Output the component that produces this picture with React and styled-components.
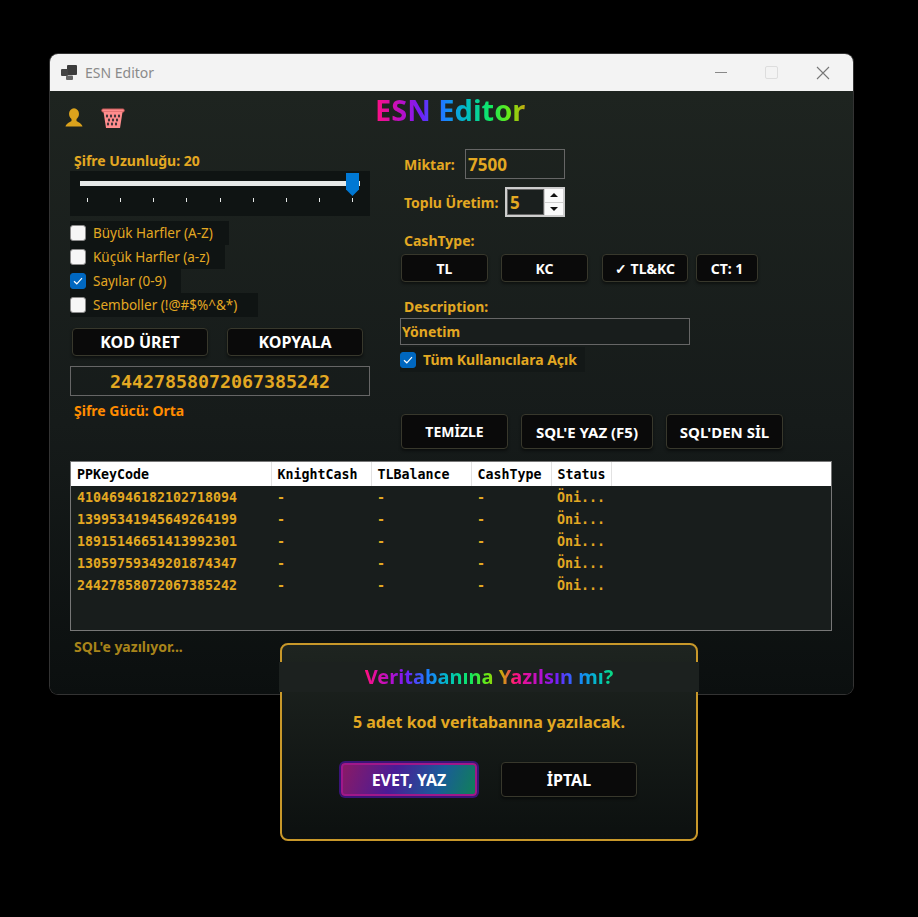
import React from 'react';
import styled, { createGlobalStyle } from 'styled-components';

const GOLD = '#e3a822';
const SANS = '"Noto Sans", "Open Sans", sans-serif';
const MONO = '"DejaVu Sans Mono", "Liberation Mono", monospace';

const rows = [
  '41046946182102718094',
  '13995341945649264199',
  '18915146651413992301',
  '13059759349201874347',
  '24427858072067385242',
];

const checks = [
  { label: 'Büyük Harfler (A-Z)', width: 159, on: false },
  { label: 'Küçük Harfler (a-z)', width: 155, on: false },
  { label: 'Sayılar (0-9)', width: 111, on: true },
  { label: 'Semboller (!@#$%^&*)', width: 188, on: false },
];

function CheckMark() {
  return (
    <svg width="10" height="8" viewBox="0 0 10 8" fill="none">
      <path d="M1 4.2 L3.8 6.8 L9 1.2" stroke="#fff" strokeWidth="1.2" />
    </svg>
  );
}

function AppIcon() {
  return (
    <svg width="16" height="15" viewBox="0 0 16 15">
      <rect x="6" y="0" width="10" height="10" rx="1" fill="#3c3c3c" />
      <rect x="0" y="4" width="7" height="7" rx="1" fill="#444" />
      <rect x="5" y="10.5" width="7" height="4.5" rx="1" fill="#666" />
    </svg>
  );
}

function UserIcon() {
  return (
    <svg width="18" height="19" viewBox="0 0 18 19">
      <ellipse cx="9" cy="6" rx="5" ry="5.8" fill="#dba21c" />
      <path d="M6.5 10 H11.5 V13 C13.5 14.6 16.5 15 17.5 18.5 H0.5 C1.5 15 4.5 14.6 6.5 13 Z" fill="#dba21c" />
    </svg>
  );
}

function BasketIcon() {
  const holes = [
    [6, 8], [10, 8], [14, 8], [18, 8],
    [8, 12], [12, 12], [16, 12],
    [7, 16], [11, 16], [15, 16],
  ];
  return (
    <svg width="24" height="21" viewBox="0 0 24 21">
      <rect x="0.8" y="1" width="22.4" height="3" rx="1.2" fill="#ff8d8d" stroke="#c85a5a" strokeWidth="1" />
      <path d="M2.5 4 H21.5 L19 20 H5 Z" fill="#ff8d8d" />
      {holes.map(([x, y]) => (
        <path key={`${x}-${y}`} d={`M${x} ${y - 2} L${x + 1.2} ${y} L${x} ${y + 2} L${x - 1.2} ${y} Z`} fill="#2a2a30" />
      ))}
    </svg>
  );
}

function App() {
  return (
    <>
      <GlobalStyle />
      <Window>
        <TitleBar>
          <AppIcon />
          <WindowName>ESN Editor</WindowName>
          <WindowControls>
            <MinimizeGlyph />
            <MaximizeGlyph />
            <svg width="14" height="14" viewBox="0 0 14 14">
              <path d="M1 1 L13 13 M13 1 L1 13" stroke="#777" strokeWidth="1.1" />
            </svg>
          </WindowControls>
        </TitleBar>

        <Body>
          <Header>
            <HeaderIcons>
              <UserIcon />
              <BasketIcon />
            </HeaderIcons>
            <Rainbow $size={29} $period={165}>ESN Editor</Rainbow>
          </Header>

          <Columns>
            <Column>
              <SliderLabel>Şifre Uzunluğu: 20</SliderLabel>
              <SliderPanel>
                <SliderTrack>
                  <SliderThumb />
                </SliderTrack>
                <Ticks>
                  {Array.from({ length: 9 }, (_, i) => <Tick key={i} />)}
                </Ticks>
              </SliderPanel>

              <CheckList>
                {checks.map((c) => (
                  <CheckRow key={c.label} $width={c.width}>
                    <Box $on={c.on}>{c.on && <CheckMark />}</Box>
                    <CheckText>{c.label}</CheckText>
                  </CheckRow>
                ))}
              </CheckList>

              <MainButtons>
                <Button $w={136} $h={28} $size={16}>KOD ÜRET</Button>
                <Button $w={136} $h={28} $size={16}>KOPYALA</Button>
              </MainButtons>
              <CodeBox>24427858072067385242</CodeBox>
              <Strength>Şifre Gücü: Orta</Strength>
            </Column>

            <Column>
              <FieldRow>
                <FieldLabel $w={61}>Miktar:</FieldLabel>
                <AmountBox>7500</AmountBox>
              </FieldRow>
              <SpinRow>
                <FieldLabel $w={101}>Toplu Üretim:</FieldLabel>
                <Spinner>
                  <SpinValue>5</SpinValue>
                  <SpinButtons>
                    <SpinButton><ArrowUp /></SpinButton>
                    <SpinButton><ArrowDown /></SpinButton>
                  </SpinButtons>
                </Spinner>
              </SpinRow>

              <CashLabel>CashType:</CashLabel>
              <CashRow>
                <Button $w={87} $h={28} $size={14}>TL</Button>
                <Button $w={87} $h={28} $size={14} $ml={13}>KC</Button>
                <Button $w={86} $h={28} $size={14} $ml={14}>✓ TL&amp;KC</Button>
                <Button $w={62} $h={28} $size={14} $ml={8}>CT: 1</Button>
              </CashRow>

              <DescLabel>Description:</DescLabel>
              <DescBox>Yönetim</DescBox>
              <PublicRow>
                <Box $on><CheckMark /></Box>
                <PublicText>Tüm Kullanıcılara Açık</PublicText>
              </PublicRow>

              <ActionRow>
                <Button $w={107} $h={35} $size={14}>TEMİZLE</Button>
                <Button $w={132} $h={35} $size={15} $ml={13}>SQL'E YAZ (F5)</Button>
                <Button $w={117} $h={35} $size={15} $ml={13}>SQL'DEN SİL</Button>
              </ActionRow>
            </Column>
          </Columns>

          <TableBox>
            <Table>
              <colgroup>
                <col width="200" />
                <col width="100" />
                <col width="100" />
                <col width="80" />
                <col width="60" />
                <col />
              </colgroup>
              <thead>
                <tr>
                  <Th>PPKeyCode</Th>
                  <Th>KnightCash</Th>
                  <Th>TLBalance</Th>
                  <Th>CashType</Th>
                  <Th>Status</Th>
                  <Th $blank />
                </tr>
              </thead>
              <tbody>
                {rows.map((code) => (
                  <tr key={code}>
                    <Td>{code}</Td>
                    <Td>-</Td>
                    <Td>-</Td>
                    <Td>-</Td>
                    <Td>Öni...</Td>
                    <Td />
                  </tr>
                ))}
              </tbody>
            </Table>
          </TableBox>
          <StatusLine>SQL'e yazılıyor...</StatusLine>
        </Body>

        <Modal>
          <ModalTitle>
            <Rainbow $size={20} $period={150}>Veritabanına Yazılsın mı?</Rainbow>
          </ModalTitle>
          <ModalMessage>5 adet kod veritabanına yazılacak.</ModalMessage>
          <ModalButtons>
            <ConfirmButton>EVET, YAZ</ConfirmButton>
            <Button $w={136} $h={35} $size={16}>İPTAL</Button>
          </ModalButtons>
        </Modal>
      </Window>
    </>
  );
}

export default App;

// STYLES
const GlobalStyle = createGlobalStyle`
  html, body {
    margin: 0;
    background: #000;
  }
  body {
    font-family: ${SANS};
    min-height: 917px;
  }
`;

const Window = styled.div`
  position: relative;
  width: 803px;
  height: 640px;
  margin: 54px 0 0 50px;
  display: flex;
  flex-direction: column;
  border-radius: 8px;
  box-shadow: 0 0 0 1px #333;
`;

const TitleBar = styled.div`
  height: 37px;
  flex: none;
  display: flex;
  align-items: center;
  padding: 0 0 0 11px;
  background: #f3f3f3;
  border-radius: 8px 8px 0 0;
`;

const WindowName = styled.span`
  margin-left: 8px;
  font-size: 14px;
  color: #8a8a8a;
`;

const WindowControls = styled.div`
  margin-left: auto;
  display: flex;
  align-items: center;
  gap: 38px;
  padding-right: 23px;
`;

const MinimizeGlyph = styled.span`
  width: 12px;
  height: 1px;
  background: #888;
`;

const MaximizeGlyph = styled.span`
  width: 11px;
  height: 11px;
  border: 1px solid #ddd;
  border-radius: 2px;
`;

const Body = styled.div`
  flex: 1;
  display: flex;
  flex-direction: column;
  padding: 0 21px 0 20px;
  background: linear-gradient(180deg, #1e2420 0%, #161b1a 55%, #0b0f0f 100%);
  border-radius: 0 0 8px 8px;
`;

const Header = styled.div`
  height: 58px;
  flex: none;
  display: flex;
  align-items: flex-start;
`;

const HeaderIcons = styled.div`
  width: 305px;
  flex: none;
  margin-left: -5px;
  margin-right: 5px;
  padding-top: 17px;
  display: flex;
  align-items: flex-start;
  gap: 18px;
`;

const Rainbow = styled.span`
  display: inline-block;
  font-family: ${SANS};
  font-weight: 700;
  font-size: ${(p) => p.$size}px;
  line-height: 1.3;
  color: transparent;
  background: repeating-linear-gradient(
    90deg,
    #ff1080 0,
    #b010d0 ${(p) => p.$period * 0.18}px,
    #7020f8 ${(p) => p.$period * 0.28}px,
    #1a80ff ${(p) => p.$period * 0.42}px,
    #00c0c0 ${(p) => p.$period * 0.56}px,
    #10e860 ${(p) => p.$period * 0.7}px,
    #70e810 ${(p) => p.$period * 0.82}px,
    #d0a010 ${(p) => p.$period * 0.92}px,
    #ff1080 ${(p) => p.$period}px
  );
  -webkit-background-clip: text;
  background-clip: text;
`;

const Columns = styled.div`
  height: 312px;
  flex: none;
  display: grid;
  grid-template-columns: 300px 1fr;
  column-gap: 30px;
`;

const Column = styled.div`
  display: flex;
  flex-direction: column;
  align-items: flex-start;
`;

const GoldLabel = styled.div`
  font-weight: 700;
  font-size: 14px;
  color: ${GOLD};
  white-space: nowrap;
`;

const SliderLabel = styled(GoldLabel)`
  height: 22px;
  line-height: 24px;
  padding-left: 4px;
`;

const SliderPanel = styled.div`
  width: 300px;
  height: 45px;
  box-sizing: border-box;
  padding: 10px 10px 0;
  background: #0f1413;
`;

const SliderTrack = styled.div`
  position: relative;
  height: 5px;
  background: #e6e9e8;
`;

const SliderThumb = styled.div`
  position: absolute;
  right: 1px;
  top: -8px;
  width: 13px;
  height: 23px;
  background: #0078d4;
  clip-path: polygon(0 0, 100% 0, 100% 72%, 50% 100%, 0 72%);
`;

const Ticks = styled.div`
  display: flex;
  justify-content: space-between;
  padding: 12px 7px 0;
`;

const Tick = styled.span`
  width: 1px;
  height: 4px;
  background: #e6e9e8;
`;

const CheckList = styled.div`
  margin-top: 5px;
  display: flex;
  flex-direction: column;
`;

const CheckRow = styled.div`
  width: ${(p) => p.$width}px;
  height: 24px;
  display: flex;
  align-items: center;
  gap: 7px;
  background: #0f1413;
`;

const Box = styled.span`
  width: 16px;
  height: 16px;
  flex: none;
  box-sizing: border-box;
  display: flex;
  align-items: center;
  justify-content: center;
  border-radius: 3px;
  background: ${(p) => (p.$on ? '#0067c0' : '#f6f6f6')};
  border: 1px solid ${(p) => (p.$on ? '#0067c0' : '#8a8a8a')};
`;

const CheckText = styled.span`
  font-size: 13.5px;
  color: ${GOLD};
  white-space: nowrap;
`;

const Button = styled.div`
  width: ${(p) => p.$w}px;
  height: ${(p) => p.$h}px;
  margin-left: ${(p) => p.$ml || 0}px;
  flex: none;
  box-sizing: border-box;
  display: flex;
  align-items: center;
  justify-content: center;
  background: #0a0a0a;
  border: 1px solid #38382c;
  border-radius: 4px;
  box-shadow: 0 2px 3px rgba(0, 0, 0, 0.45);
  color: #fff;
  font-weight: 700;
  font-size: ${(p) => p.$size}px;
  white-space: nowrap;
`;

const MainButtons = styled.div`
  margin: 11px 0 0 2px;
  display: flex;
  gap: 19px;
`;

const CodeBox = styled.div`
  width: 300px;
  height: 30px;
  margin-top: 10px;
  box-sizing: border-box;
  display: flex;
  align-items: center;
  justify-content: center;
  border: 1px solid #666;
  font-family: ${MONO};
  font-weight: 700;
  font-size: 18.3px;
  color: ${GOLD};
`;

const Strength = styled.div`
  margin-top: 5px;
  padding-left: 4px;
  font-weight: 700;
  font-size: 14px;
  color: #ff8c00;
`;

const FieldRow = styled.div`
  height: 30px;
  display: flex;
  align-items: center;
  padding-left: 4px;
`;

const SpinRow = styled(FieldRow)`
  margin-top: 8px;
`;

const FieldLabel = styled(GoldLabel)`
  width: ${(p) => p.$w}px;
  flex: none;
`;

const AmountBox = styled.div`
  width: 100px;
  height: 30px;
  box-sizing: border-box;
  padding-left: 2px;
  display: flex;
  align-items: center;
  border: 1px solid #666;
  font-weight: 700;
  font-size: 17px;
  color: ${GOLD};
`;

const Spinner = styled.div`
  width: 60px;
  height: 30px;
  box-sizing: border-box;
  display: flex;
  gap: 1px;
  padding: 1px;
  border: 1px solid #ccc;
  background: #cfcfcf;
`;

const SpinValue = styled.div`
  width: 37px;
  box-sizing: border-box;
  display: flex;
  align-items: center;
  padding-left: 2px;
  border: 1px solid #666;
  background: #1a1f1e;
  font-weight: 700;
  font-size: 17px;
  color: ${GOLD};
`;

const SpinButtons = styled.div`
  flex: 1;
  display: flex;
  flex-direction: column;
  gap: 1px;
`;

const SpinButton = styled.div`
  flex: 1;
  display: flex;
  align-items: center;
  justify-content: center;
  background: #fafafa;
`;

const ArrowUp = styled.span`
  border-left: 4px solid transparent;
  border-right: 4px solid transparent;
  border-bottom: 4px solid #111;
`;

const ArrowDown = styled.span`
  border-left: 4px solid transparent;
  border-right: 4px solid transparent;
  border-top: 4px solid #111;
`;

const CashLabel = styled(GoldLabel)`
  height: 20px;
  line-height: 20px;
  margin-top: 14px;
  padding-left: 4px;
`;

const CashRow = styled.div`
  margin: 3px 0 0 1px;
  display: flex;
`;

const DescLabel = styled(GoldLabel)`
  height: 20px;
  line-height: 20px;
  margin-top: 15px;
  padding-left: 4px;
`;

const DescBox = styled.div`
  width: 290px;
  height: 27px;
  margin-top: 1px;
  box-sizing: border-box;
  display: flex;
  align-items: center;
  padding-left: 1px;
  border: 1px solid #666;
  background: #181d1c;
  font-weight: 700;
  font-size: 14px;
  color: ${GOLD};
`;

const PublicRow = styled.div`
  width: 185px;
  height: 25px;
  margin-top: 2px;
  display: flex;
  align-items: center;
  gap: 7px;
  background: #131817;
`;

const PublicText = styled(GoldLabel)``;

const ActionRow = styled.div`
  margin: 42px 0 0 1px;
  display: flex;
`;

const TableBox = styled.div`
  height: 170px;
  flex: none;
  box-sizing: border-box;
  border: 1px solid #777;
  background: #181d1c;
`;

const Table = styled.table`
  width: 100%;
  table-layout: fixed;
  border-collapse: collapse;
  font-family: ${MONO};
  font-size: 13.3px;
  font-weight: 700;
`;

const Th = styled.th`
  height: 24px;
  padding: 0 0 0 6px;
  box-sizing: border-box;
  text-align: left;
  background: #fff;
  color: #000;
  border-right: ${(p) => (p.$blank ? 'none' : '1px solid #e2e2e2')};
`;

const Td = styled.td`
  height: 22px;
  padding: 0 0 0 6px;
  box-sizing: border-box;
  color: ${GOLD};
  white-space: nowrap;
`;

const StatusLine = styled.div`
  margin-top: 6px;
  padding-left: 4px;
  font-weight: 700;
  font-size: 14px;
  color: #a8841a;
`;

const Modal = styled.div`
  position: absolute;
  left: 230px;
  top: 589px;
  width: 418px;
  height: 198px;
  box-sizing: border-box;
  padding-top: 17px;
  display: flex;
  flex-direction: column;
  align-items: center;
  border: 2px solid #c8982a;
  border-radius: 8px;
  background: linear-gradient(180deg, #1e2420 0%, #0c100f 100%);
`;

const ModalTitle = styled.div`
  align-self: stretch;
  height: 30px;
  margin: 0 -3px;
  display: flex;
  align-items: center;
  justify-content: center;
  background: #1c211f;
`;

const ModalMessage = styled.div`
  margin-top: 19px;
  font-weight: 700;
  font-size: 16px;
  color: ${GOLD};
`;

const ModalButtons = styled.div`
  margin-top: 29px;
  display: flex;
  align-items: center;
  gap: 24px;
`;

const ConfirmButton = styled.div`
  width: 136px;
  height: 33px;
  box-sizing: border-box;
  display: flex;
  align-items: center;
  justify-content: center;
  border: 2px solid #a0188a;
  border-radius: 4px;
  box-shadow: 0 0 0 2px #3a1478;
  background: linear-gradient(110deg, #8a1a66 0%, #4a1c96 38%, #1a5c98 72%, #108058 100%);
  color: #fff;
  font-weight: 700;
  font-size: 16px;
`;
